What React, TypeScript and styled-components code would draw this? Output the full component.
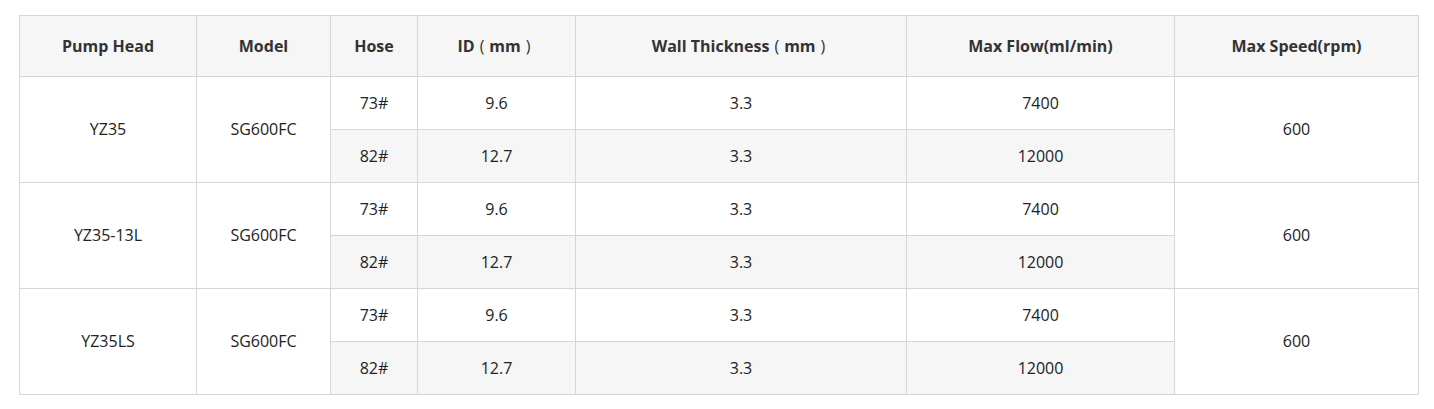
import React from "react";
import styled, { createGlobalStyle } from "styled-components";

const Global = createGlobalStyle`
  html, body { margin: 0; padding: 0; background: #fff; }
  body { font-family: "Open Sans", "Noto Sans CJK SC", "Liberation Sans", sans-serif; }
`;

const Wrap = styled.div`
  padding: 15px 15px 15px 19px;
`;

const Table = styled.table`
  width: 1399px;
  border-collapse: collapse;
  table-layout: fixed;
  font-size: 16px;
  line-height: 1.3;
  color: #333;
`;

const Th = styled.th`
  height: 60px;
  padding: 0;
  background: #f6f6f6;
  border: 1px solid #d6d6d6;
  font-weight: 700;
  text-align: center;
  vertical-align: middle;
`;

const Td = styled.td<{ $shade?: boolean }>`
  height: 52px;
  padding: 0;
  border: 1px solid #d6d6d6;
  text-align: center;
  vertical-align: middle;
  color: #222;
  background: ${(p) => (p.$shade ? "#f6f6f6" : "#fff")};
`;

const Paren = styled.span`
  padding: 0 5px;
  font-weight: 400;
`;

const widths = [177, 134, 87, 158, 331, 268, 244];
const headers: React.ReactNode[] = [
  "Pump Head",
  "Model",
  "Hose",
  <>
    ID<Paren>(</Paren>mm<Paren>)</Paren>
  </>,
  <>
    Wall Thickness<Paren>(</Paren>mm<Paren>)</Paren>
  </>,
  "Max Flow(ml/min)",
  "Max Speed(rpm)",
];

const groups = [
  { head: "YZ35", model: "SG600FC" },
  { head: "YZ35-13L", model: "SG600FC" },
  { head: "YZ35LS", model: "SG600FC" },
];

const hoses = [
  { hose: "73#", id: "9.6", wall: "3.3", flow: "7400" },
  { hose: "82#", id: "12.7", wall: "3.3", flow: "12000" },
];

export default function App() {
  return (
    <>
      <Global />
      <Wrap>
        <Table>
          <colgroup>
            {widths.map((w, i) => (
              <col key={i} style={{ width: w }} />
            ))}
          </colgroup>
          <thead>
            <tr>
              {headers.map((h, i) => (
                <Th key={i}>{h}</Th>
              ))}
            </tr>
          </thead>
          <tbody>
            {groups.map((g) =>
              hoses.map((h, i) => (
                <tr key={g.head + h.hose}>
                  {i === 0 && <Td rowSpan={2}>{g.head}</Td>}
                  {i === 0 && <Td rowSpan={2}>{g.model}</Td>}
                  <Td $shade={i === 1}>{h.hose}</Td>
                  <Td $shade={i === 1}>{h.id}</Td>
                  <Td $shade={i === 1}>{h.wall}</Td>
                  <Td $shade={i === 1}>{h.flow}</Td>
                  {i === 0 && <Td rowSpan={2}>600</Td>}
                </tr>
              ))
            )}
          </tbody>
        </Table>
      </Wrap>
    </>
  );
}
